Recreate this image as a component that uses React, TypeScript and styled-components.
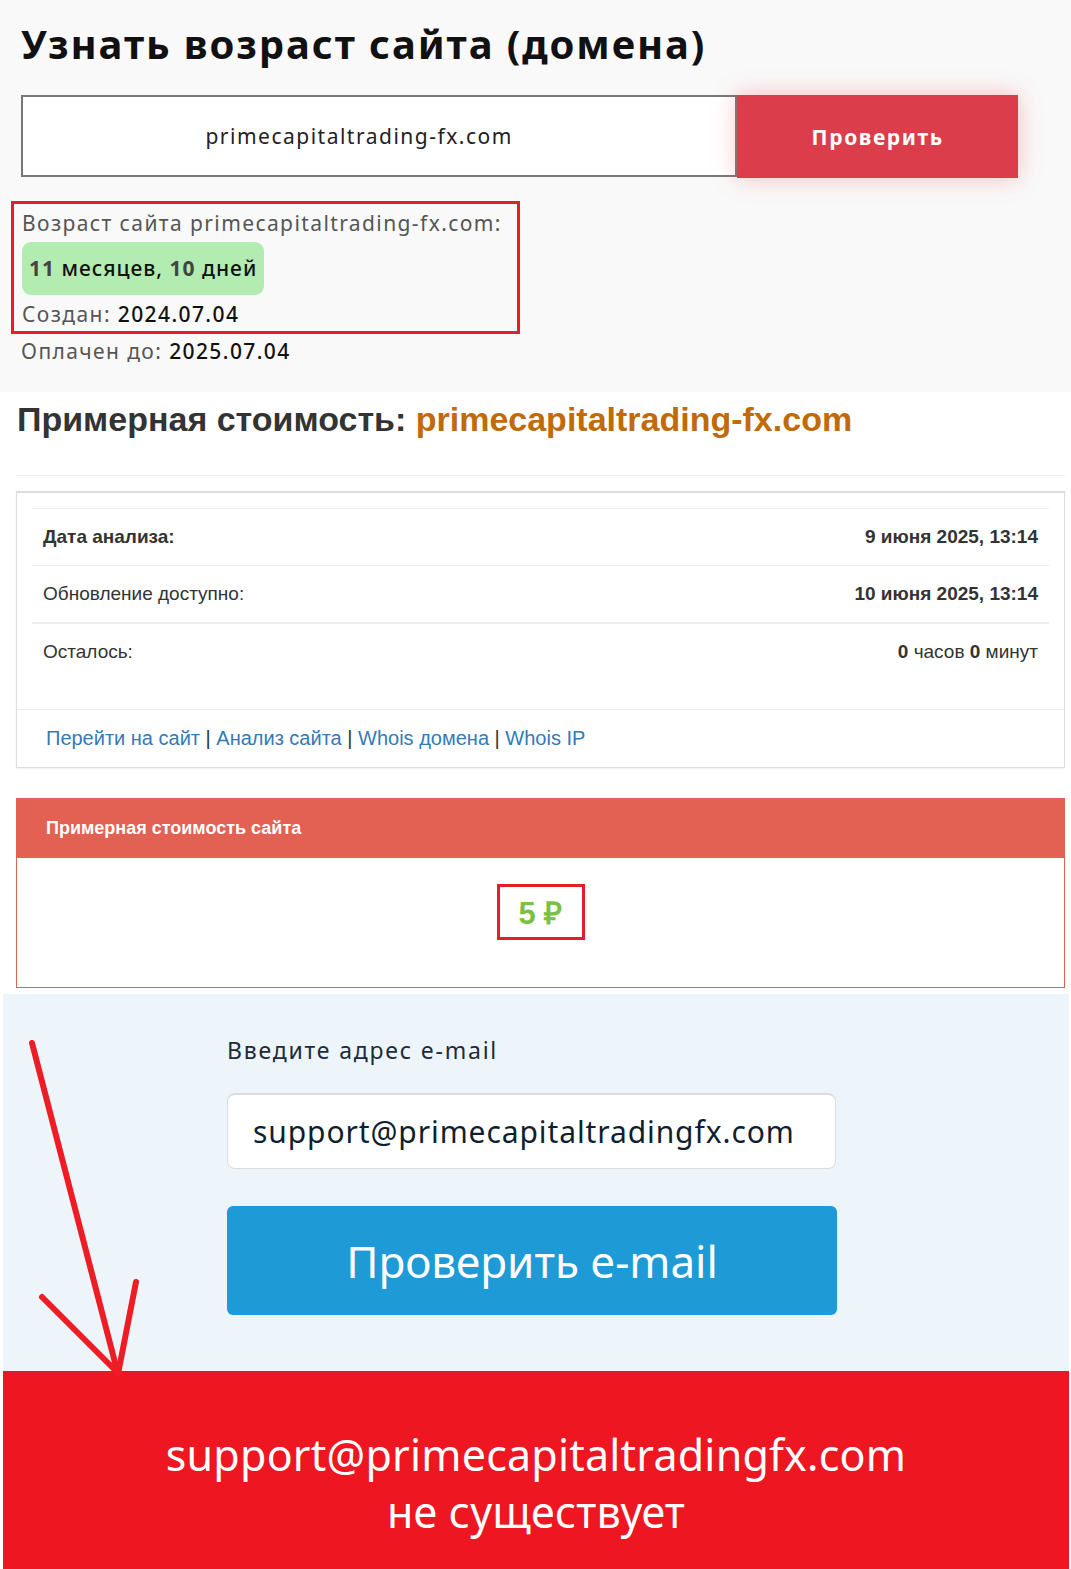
import styled, { createGlobalStyle } from "styled-components";

const GlobalStyle = createGlobalStyle`
  body {
    margin: 0;
    background: #ffffff;
    font-family: "Liberation Sans", Arial, sans-serif;
  }
`;

const Page = styled.div`
  width: 1071px;
  overflow: hidden;
`;

/* ---------- возраст домена ---------- */

const AgeSection = styled.section`
  background: #f9f9f9;
  height: 392px;
  box-sizing: border-box;
  padding: 20px 21px 0;
  font-family: "Noto Sans", sans-serif;
`;

const Title = styled.h1`
  margin: 0;
  font-size: 40px;
  line-height: 48px;
  font-weight: 700;
  color: #111;
  letter-spacing: 1.9px;
`;

const SearchRow = styled.div`
  display: flex;
  margin-top: 27px;
  width: 997px;
`;

const DomainInput = styled.div`
  width: 717px;
  height: 82px;
  box-sizing: border-box;
  border: 2px solid #777;
  background: #fff;
  display: flex;
  align-items: center;
  justify-content: center;
  padding-right: 40px;
  font-size: 21px;
  letter-spacing: 1.5px;
  color: #222;
`;

const CheckButton = styled.button`
  width: 281px;
  height: 83px;
  border: none;
  background: #dc3d4b;
  color: #fff;
  font-family: "Noto Sans", sans-serif;
  font-size: 21px;
  font-weight: 700;
  letter-spacing: 1.6px;
  box-shadow: 0 0 22px rgba(240, 80, 90, 0.35);
`;

const ResultBox = styled.div`
  margin: 23px 0 0 -10px;
  width: 509px;
  box-sizing: border-box;
  border: 3px solid #e3202a;
  padding: 5px 8px 3px;
`;

const Line = styled.div`
  font-size: 21px;
  line-height: 28px;
  letter-spacing: 1.4px;
  color: #555;
  white-space: nowrap;
`;

const Value = styled.span`
  color: #111;
  font-weight: 500;
`;

const AgePill = styled.div`
  display: inline-block;
  margin: 5px 0 5px;
  padding: 0 7px;
  height: 53px;
  line-height: 53px;
  background: #b3ecb0;
  border-radius: 9px;
  font-size: 21px;
  font-weight: 500;
  letter-spacing: 1px;
  color: #111;
`;

const Num = styled.b`
  color: #444;
`;

const PaidLine = styled(Line)`
  margin-top: 3px;
`;

/* ---------- оценка стоимости ---------- */

const PriceSection = styled.section`
  background: #fff;
  padding: 0 6px 6px 16px;
`;

const PriceHeading = styled.h2`
  margin: 0;
  padding: 7px 0 0 1px;
  height: 84px;
  box-sizing: border-box;
  font-size: 34px;
  line-height: 40px;
  font-weight: 700;
  color: #333;
  border-bottom: 1px solid #eee;
`;

const Domain = styled.span`
  color: #c06a08;
`;

const InfoCard = styled.div`
  margin-top: 15px;
  border: 1px solid #ddd;
  border-top: 2px solid #ddd;
  box-shadow: 0 1px 2px rgba(0, 0, 0, 0.06);
`;

const InfoBody = styled.div`
  padding: 15px 15px 29px;
`;

const InfoRow = styled.div<{ $thick?: boolean }>`
  display: flex;
  justify-content: space-between;
  align-items: center;
  height: 56px;
  padding: 0 11px;
  border-top: ${({ $thick }) => ($thick ? "2px" : "1px")} solid #eee;
  font-size: 19px;
  color: #333;
`;

const InfoFooter = styled.div`
  border-top: 1px solid #eee;
  height: 57px;
  display: flex;
  align-items: center;
  padding-left: 29px;
  font-size: 20px;
  color: #333;
`;

const Link = styled.a`
  color: #337ab7;
  text-decoration: none;
`;

const CostCard = styled.div`
  margin-top: 30px;
  border: 1px solid #e26152;
`;

const CostHeader = styled.div`
  background: #e26152;
  height: 59px;
  display: flex;
  align-items: center;
  padding-left: 29px;
  color: #fff;
  font-size: 18px;
  font-weight: 700;
`;

const CostBody = styled.div`
  height: 129px;
  display: flex;
  justify-content: center;
  padding-top: 26px;
  box-sizing: border-box;
`;

const CostValue = styled.div`
  width: 88px;
  height: 56px;
  box-sizing: border-box;
  border: 3px solid #e3202a;
  display: flex;
  align-items: center;
  justify-content: center;
  color: #7ac143;
  font-size: 31px;
  font-weight: 700;
`;

/* ---------- проверка e-mail ---------- */

const EmailSection = styled.section`
  position: relative;
  margin: 0 2px 0 3px;
  background: #eef5fa;
  height: 377px;
  box-sizing: border-box;
  padding: 41px 0 0 224px;
  font-family: "Noto Sans", sans-serif;
`;

const EmailLabel = styled.div`
  font-size: 23px;
  line-height: 30px;
  letter-spacing: 1.8px;
  color: #1d2b3a;
`;

const EmailInput = styled.div`
  margin-top: 28px;
  width: 609px;
  height: 76px;
  box-sizing: border-box;
  background: #fff;
  border: 1px solid #dcdcdc;
  border-top: 2px solid #dcdcdc;
  border-radius: 8px;
  display: flex;
  align-items: center;
  padding-left: 25px;
  font-size: 30px;
  letter-spacing: 0.9px;
  color: #0f1f2e;
`;

const EmailButton = styled.button`
  margin-top: 37px;
  width: 610px;
  height: 109px;
  border: none;
  border-radius: 6px;
  background: #1e9ad6;
  color: #fff;
  font-family: "Noto Sans", sans-serif;
  font-size: 44px;
  display: block;
`;

const Arrow = styled.svg`
  position: absolute;
  left: -3px;
  top: 0;
  overflow: visible;
`;

const VerdictSection = styled.section`
  margin: 0 2px 0 3px;
  background: #ee1620;
  height: 199px;
  box-sizing: border-box;
  padding-top: 55px;
  text-align: center;
  color: #fff;
  font-family: "Noto Sans", sans-serif;
  font-size: 43px;
  line-height: 57px;
  letter-spacing: 0.2px;
`;

export default function App() {
  return (
    <Page>
      <GlobalStyle />
      <AgeSection>
        <Title>Узнать возраст сайта (домена)</Title>
        <SearchRow>
          <DomainInput>primecapitaltrading-fx.com</DomainInput>
          <CheckButton>Проверить</CheckButton>
        </SearchRow>
        <ResultBox>
          <Line>Возраст сайта primecapitaltrading-fx.com:</Line>
          <AgePill>
            <Num>11</Num> месяцев, <Num>10</Num> дней
          </AgePill>
          <Line>
            Создан: <Value>2024.07.04</Value>
          </Line>
        </ResultBox>
        <PaidLine>
          Оплачен до: <Value>2025.07.04</Value>
        </PaidLine>
      </AgeSection>

      <PriceSection>
        <PriceHeading>
          Примерная стоимость: <Domain>primecapitaltrading-fx.com</Domain>
        </PriceHeading>
        <InfoCard>
          <InfoBody>
            <InfoRow>
              <b>Дата анализа:</b>
              <b>9 июня 2025, 13:14</b>
            </InfoRow>
            <InfoRow>
              <span>Обновление доступно:</span>
              <b>10 июня 2025, 13:14</b>
            </InfoRow>
            <InfoRow $thick>
              <span>Осталось:</span>
              <span>
                <b>0</b> часов <b>0</b> минут
              </span>
            </InfoRow>
          </InfoBody>
          <InfoFooter>
            <Link>Перейти на сайт</Link>&nbsp;|&nbsp;<Link>Анализ сайта</Link>
            &nbsp;|&nbsp;<Link>Whois домена</Link>&nbsp;|&nbsp;
            <Link>Whois IP</Link>
          </InfoFooter>
        </InfoCard>
        <CostCard>
          <CostHeader>Примерная стоимость сайта</CostHeader>
          <CostBody>
            <CostValue>5 ₽</CostValue>
          </CostBody>
        </CostCard>
      </PriceSection>

      <EmailSection>
        <EmailLabel>Введите адрес e-mail</EmailLabel>
        <EmailInput>support@primecapitaltradingfx.com</EmailInput>
        <EmailButton>Проверить e-mail</EmailButton>
        <Arrow width="150" height="385" viewBox="0 0 150 385">
          <g stroke="#ee1c25" strokeWidth="6" strokeLinecap="round" fill="none">
            <line x1="32" y1="49" x2="118" y2="380" />
            <line x1="42" y1="303" x2="117" y2="378" />
            <line x1="136" y1="288" x2="118" y2="380" />
          </g>
        </Arrow>
      </EmailSection>

      <VerdictSection>
        support@primecapitaltradingfx.com
        <br />
        не существует
      </VerdictSection>
    </Page>
  );
}
